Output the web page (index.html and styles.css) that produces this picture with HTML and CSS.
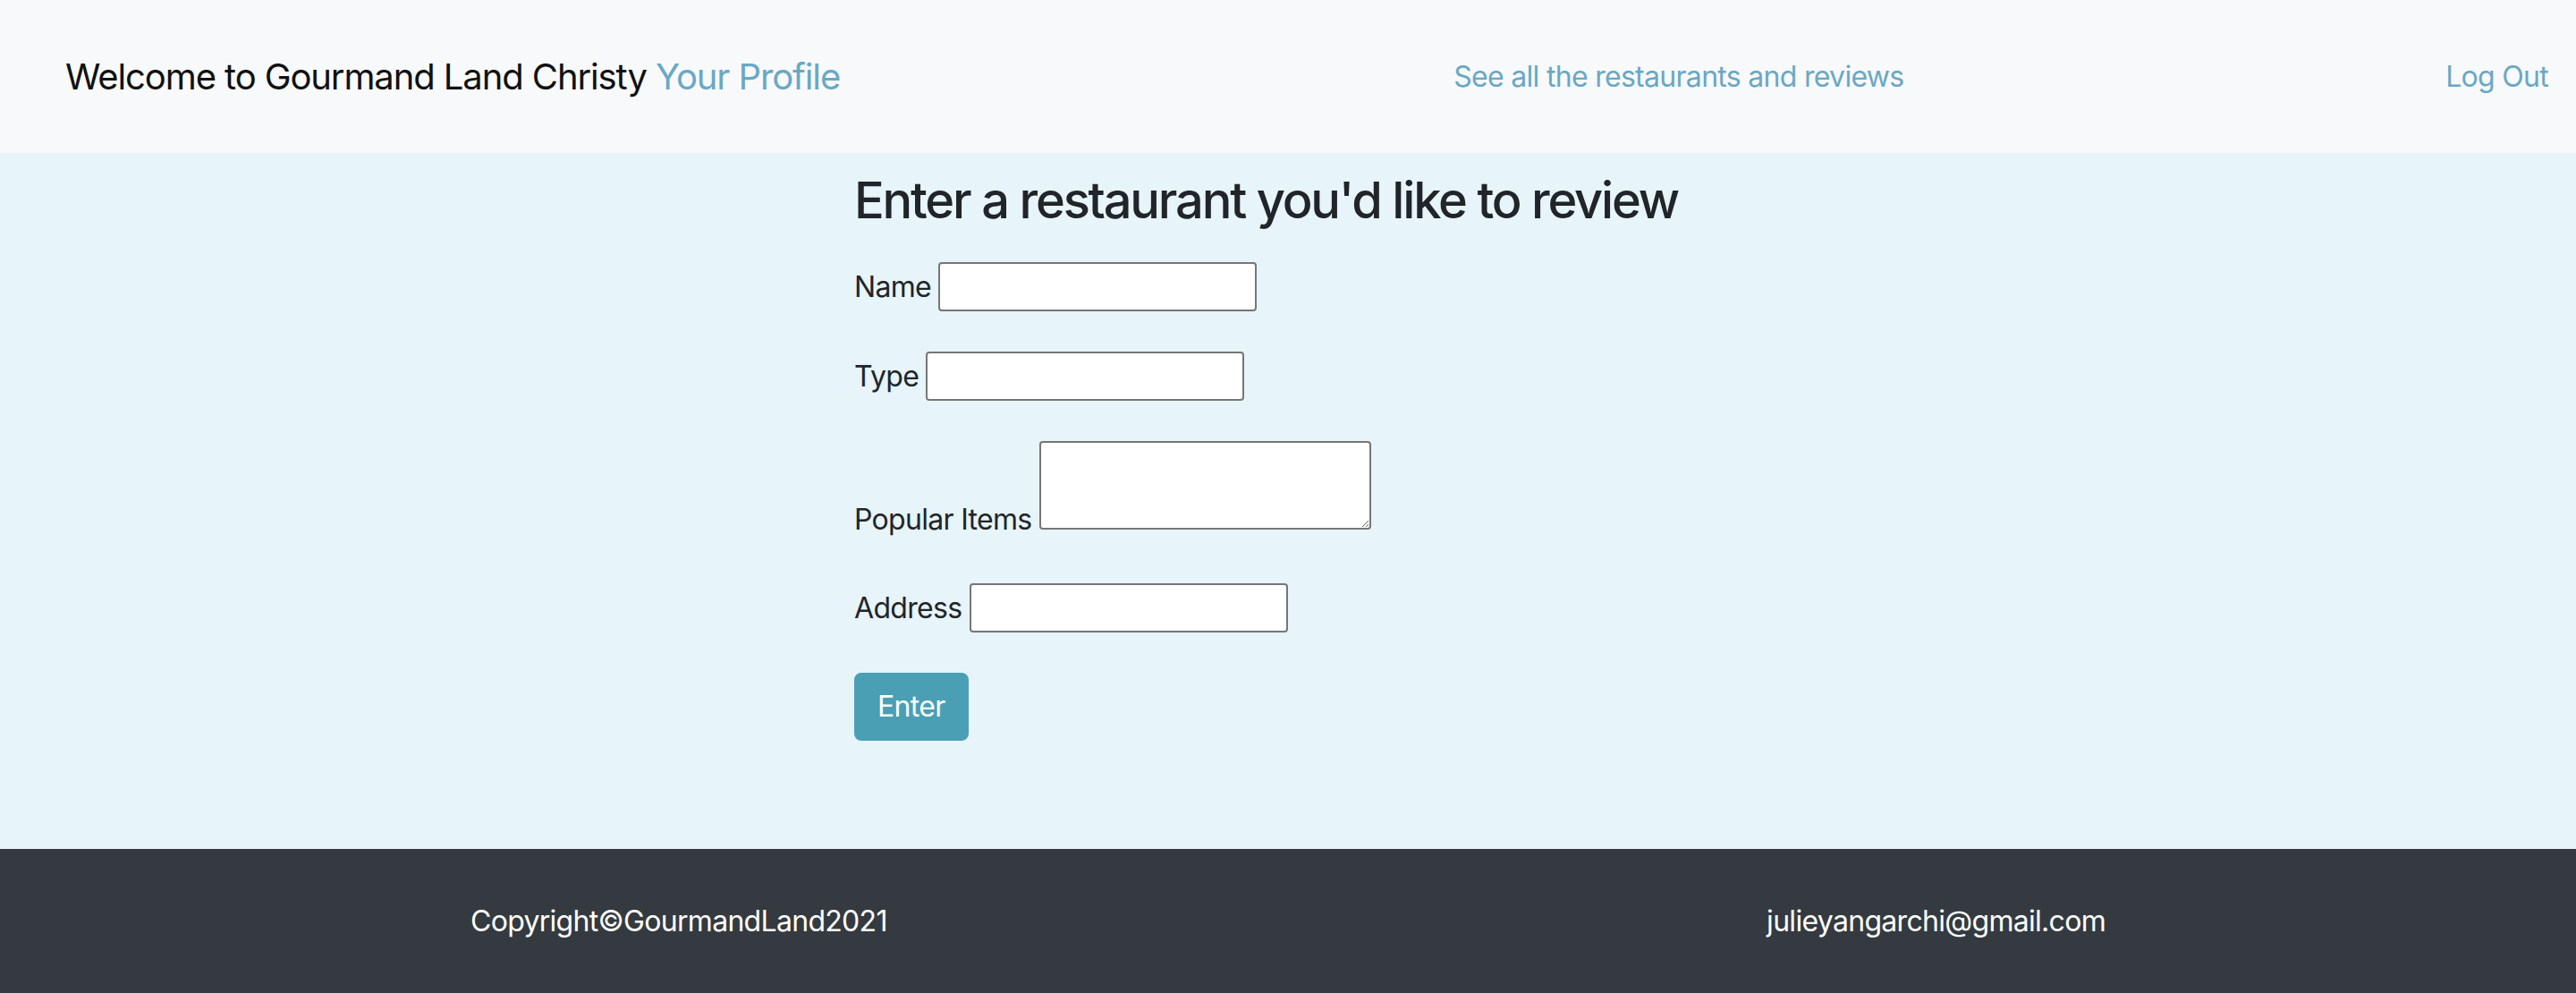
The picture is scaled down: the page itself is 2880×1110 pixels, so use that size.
FILE: index.html
```html
<!DOCTYPE html>
<html lang="en">
<head>
<meta charset="utf-8">
<title>Gourmand Land</title>
<link rel="stylesheet" href="styles.css">
</head>
<body>
<nav class="navbar">
  <div class="brand">Welcome to Gourmand Land Christy <a class="brand-link" href="#">Your Profile</a></div>
  <a class="nav-link all-link" href="#">See all the restaurants and reviews</a>
  <a class="nav-link logout" href="#">Log Out</a>
</nav>
<main class="main">
  <div class="form-wrap">
    <h3 class="title">Enter a restaurant you'd like to review</h3>
    <form class="form">
      <div class="row"><label for="name">Name</label> <input id="name" type="text" class="field"></div>
      <div class="row"><label for="type">Type</label> <input id="type" type="text" class="field"></div>
      <div class="row row-area"><label for="items">Popular Items</label> <textarea id="items" class="area"></textarea></div>
      <div class="row"><label for="address">Address</label> <input id="address" type="text" class="field"></div>
      <button type="button" class="btn">Enter</button>
    </form>
  </div>
</main>
<footer class="footer">
  <span class="foot-text">Copyright©GourmandLand2021</span>
  <span class="foot-text">julieyangarchi@gmail.com</span>
</footer>
</body>
</html>
```
FILE: styles.css
```css
html, body {
  margin: 0;
  padding: 0;
}
body {
  min-height: 100vh;
  display: flex;
  flex-direction: column;
  font-family: Inter, "Liberation Sans", sans-serif;
  font-size: 32px;
  line-height: 1.5;
  letter-spacing: -0.7px;
  color: #212529;
  background: #e7f4fa;
}
a {
  text-decoration: none;
  color: #69a8c5;
}
.navbar {
  height: 171px;
  box-sizing: border-box;
  background: #f8f9fa;
  display: flex;
  align-items: center;
  padding: 0 31px 0 73px;
}
.brand {
  font-size: 40px;
  letter-spacing: -1.1px;
  color: #111;
  white-space: nowrap;
}
.all-link {
  margin-left: 686px;
}
.logout {
  margin-left: auto;
}
.nav-link {
  font-size: 32px;
}
.main {
  flex: 1;
  background: #e7f4fa;
}
.form-wrap {
  padding: 20px 0 0 955px;
}
.title {
  font-size: 56px;
  font-weight: 500;
  letter-spacing: -2.2px;
  line-height: 1.2;
  margin: 0 0 35px 0;
}
.row {
  margin-bottom: 45px;
}
.row-area {
  margin-bottom: 47px;
}
.field {
  width: 356px;
  height: 55px;
  box-sizing: border-box;
  border: 2px solid #767676;
  border-radius: 4px;
  background: #fff;
  font: inherit;
  padding: 1px 4px;
  vertical-align: baseline;
}
.area {
  width: 371px;
  height: 99px;
  box-sizing: border-box;
  border: 2px solid #767676;
  border-radius: 4px;
  background: #fff;
  font: inherit;
  padding: 4px;
  vertical-align: baseline;
}
.btn {
  font: inherit;
  letter-spacing: -0.7px;
  color: #fff;
  background: #4a9fb4;
  border: 2px solid #4a9fb4;
  border-radius: 8px;
  padding: 12px 24px;
  height: 76px;
  line-height: 48px;
  cursor: pointer;
}
.footer {
  height: 161px;
  box-sizing: border-box;
  background: #343a40;
  color: #fff;
  display: flex;
  align-items: center;
  justify-content: space-between;
  padding: 0 526px;
}
.foot-text {
  font-size: 32px;
}
```
